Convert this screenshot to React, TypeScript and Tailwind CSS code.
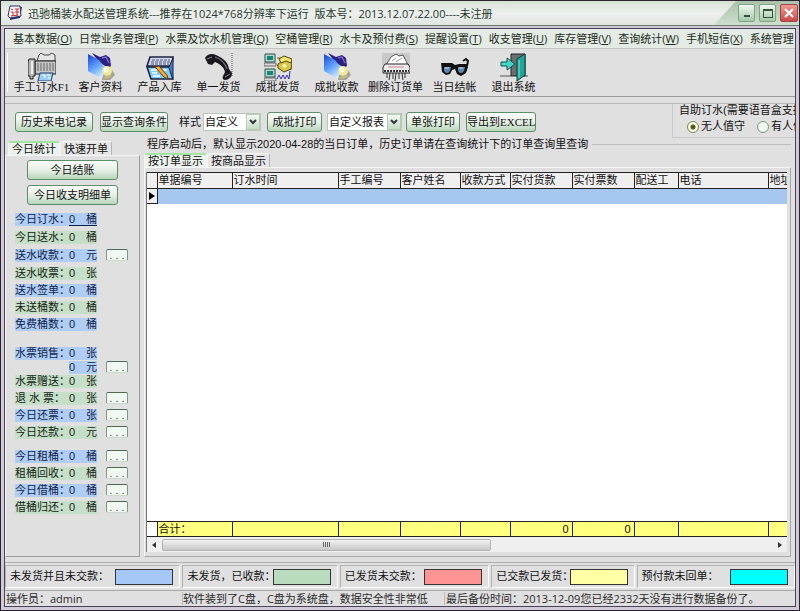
import { clsx } from "clsx";
import type { ReactNode } from "react";

const menus = [
    { label: "基本数据", hotkey: "O" },
    { label: "日常业务管理", hotkey: "P" },
    { label: "水票及饮水机管理", hotkey: "Q" },
    { label: "空桶管理", hotkey: "R" },
    { label: "水卡及预付费", hotkey: "S" },
    { label: "提醒设置", hotkey: "T" },
    { label: "收支管理", hotkey: "U" },
    { label: "库存管理", hotkey: "V" },
    { label: "查询统计", hotkey: "W" },
    { label: "手机短信", hotkey: "X" },
    { label: "系统管理", hotkey: "" },
];

type Stat = { label: string; value: string; unit: string; tone: "blue" | "green"; more?: boolean; link?: boolean };

const deliveryStats: Stat[] = [
    { label: "今日订水：", value: "0", unit: "桶", tone: "blue", link: true },
    { label: "今日送水：", value: "0", unit: "桶", tone: "green" },
    { label: "送水收款：", value: "0", unit: "元", tone: "blue", more: true },
    { label: "送水收票：", value: "0", unit: "张", tone: "green" },
];

const pendingStats: Stat[] = [
    { label: "送水签单：", value: "0", unit: "桶", tone: "blue" },
    { label: "未送桶数：", value: "0", unit: "桶", tone: "green" },
    { label: "免费桶数：", value: "0", unit: "桶", tone: "blue" },
];

const ticketSales: Stat[] = [
    { label: "水票销售：", value: "0", unit: "张", tone: "blue" },
    { label: "", value: "0", unit: "元", tone: "blue", more: true },
    { label: "水票赠送：", value: "0", unit: "张", tone: "green" },
];

const ticketReturns: Stat[] = [
    { label: "退 水 票：", value: "0", unit: "张", tone: "green", more: true },
    { label: "今日还票：", value: "0", unit: "张", tone: "blue", more: true },
    { label: "今日还款：", value: "0", unit: "元", tone: "green", more: true },
];

const bucketStats: Stat[] = [
    { label: "今日租桶：", value: "0", unit: "桶", tone: "blue", more: true },
    { label: "租桶回收：", value: "0", unit: "桶", tone: "green", more: true },
    { label: "今日借桶：", value: "0", unit: "桶", tone: "blue", more: true },
    { label: "借桶归还：", value: "0", unit: "桶", tone: "green", more: true },
];

const columns = [
    { title: "单据编号", width: "w-[75px]", total: "合计：" },
    { title: "订水时间", width: "w-[106px]", total: "" },
    { title: "手工编号", width: "w-[62px]", total: "" },
    { title: "客户姓名", width: "w-[60px]", total: "" },
    { title: "收款方式", width: "w-[50px]", total: "" },
    { title: "实付货款", width: "w-[62px]", total: "0" },
    { title: "实付票数", width: "w-[62px]", total: "0" },
    { title: "配送工", width: "w-[44px]", total: "" },
    { title: "电话", width: "w-[90px]", total: "" },
    { title: "地址", width: "", total: "" },
];

const legend = [
    { label: "未发货并且未交款：", color: "bg-[#a6c8f6]" },
    { label: "未发货，已收款：", color: "bg-[#b9dcbf]" },
    { label: "已发货未交款：", color: "bg-[#ff9494]" },
    { label: "已交款已发货：", color: "bg-[#ffffa6]" },
    { label: "预付款未回单：", color: "bg-[#00ffff]" },
];

function FaxIcon() {
    return (
        <svg viewBox="0 0 28 28" className="size-7" aria-hidden="true">
            <path d="M9 8l2-6 2-2 3 2h5l3-2 3 2v6z" fill="#e6e6e6" stroke="#444" />
            <path d="M7 8h21v13H7z" fill="#c6c6c6" stroke="#222" />
            <path d="M1 6h6v17H5v3H2v-3H0V9z" fill="#b4b4b4" stroke="#222" />
            <path d="M4 8v13" stroke="#eee" strokeWidth="2" />
            <path d="M9 11h17M9 13h17M9 15h17M9 17h17" stroke="#666" strokeDasharray="2 1" />
            <path d="M12 20h13l-2 8H10z" fill="#9ccdf2" stroke="#1c3f70" />
            <path d="M14 22h3v3m2-3h3m-2 3h3" stroke="#fff" fill="none" />
        </svg>
    );
}

function FolderIcon({ id }: { id: string }) {
    return (
        <svg viewBox="0 0 28 28" className="size-7" aria-hidden="true">
            <defs>
                <linearGradient id={id} x1="0.2" y1="0" x2="0.7" y2="1">
                    <stop offset="0" stopColor="#1d50d8" />
                    <stop offset="0.5" stopColor="#62a2ff" />
                    <stop offset="1" stopColor="#d8f1ff" />
                </linearGradient>
            </defs>
            <path d="M15 20l10-3 3 5-5 5-8 0z" fill="#a4a29a" />
            <path d="M5 0l8 4 6-2 4 3 1 8-3 2-9-6z" fill="#2c2380" />
            <path d="M15 5l4-1 3 6" fill="none" stroke="#7a68cc" strokeWidth="1.5" />
            <path d="M1 1l11 6 6 8-3 11L1 18z" fill={`url(#${id})`} />
            <circle cx="20" cy="18" r="5" fill="#efe89c" />
            <circle cx="19" cy="17" r="2.4" fill="#fffff0" />
            <path d="M15 25l7-3 3 1-5 3z" fill="#c9bb7c" />
        </svg>
    );
}

function StockIcon() {
    return (
        <svg viewBox="0 0 28 28" className="size-7" aria-hidden="true">
            <path d="M4 4h23l-1 9H1z" fill="#d5d9e6" stroke="#1b2244" strokeWidth="1.6" />
            <path d="M6 7h18M5 9h19M5 11h18" stroke="#4a5684" strokeDasharray="3 1" />
            <path d="M1 14h22l4 12H5z" fill="#7fcdf5" stroke="#1b2244" strokeWidth="1.6" />
            <path d="M23 14l4-9v20" fill="#3f7cc8" stroke="#1b2244" />
            <path d="M5 17h6M6 20h5M7 23h7M17 17h4" stroke="#fff" strokeWidth="1.4" />
            <path d="M9 14l4-1 8 9 1 4-4-2z" fill="#f5a735" stroke="#6b3a0d" />
        </svg>
    );
}

function PhoneIcon() {
    return (
        <svg viewBox="0 0 28 28" className="size-7" aria-hidden="true">
            <path d="M27 0v23l-5 3" fill="none" stroke="#555" strokeDasharray="1 1" />
            <path
                d="M0 5C2 1 7 0 11 2c7 3 12 7 13 14l3 4c0 4-3 7-7 7-2 0-3-2-2-4l2-4c-1-5-5-8-10-10l-3 3-4-1z"
                fill="#1c171e"
            />
            <path d="M10 4c6 2 10 6 12 12" fill="none" stroke="#7d7484" strokeWidth="1.2" />
            <path d="M2 6l5-2M20 24l5-3" stroke="#8b8791" />
        </svg>
    );
}

function NetworkIcon() {
    return (
        <svg viewBox="0 0 28 28" className="size-7" aria-hidden="true">
            <path d="M1 1h10v8H1zM1 16h10v8H1z" fill="#b9d3cd" stroke="#24544c" />
            <path d="M3 3h6v4H3zM3 18h6v4H3z" fill="#15877a" />
            <path d="M0 10h12v3H0zM0 25h12v3H0z" fill="#d9d9d9" stroke="#444" strokeWidth=".7" />
            <path d="M13 12l5 4h10M13 5h6" fill="none" stroke="#6b6b1c" />
            <path d="M14 11l8-5 6 4-1 6-7 3-6-4z" fill="#d8c648" stroke="#4e4509" />
            <path d="M15 6l5-3 8 3-1 4-5-2-5 2z" fill="#f4e66c" stroke="#4e4509" />
            <path d="M18 12l3-1 2 2-3 2z" fill="#fff7b0" />
            <path d="M13 26l2-4 2 4 2-4 2 4 2-4 2 4 1-8" fill="none" stroke="#3430b8" />
        </svg>
    );
}

function ShredderIcon() {
    return (
        <svg viewBox="0 0 28 28" className="size-7" aria-hidden="true">
            <path d="M0 0h28v12H0z" fill="#c9c9c9" />
            <path d="M4 12l5-8 5-3 3 2 4-1 5 10z" fill="#fff" stroke="#555" />
            <path d="M10 8l4-3m0 4l6-4" stroke="#999" />
            <path d="M3 11h23l2 3v6H1v-6z" fill="#ececec" stroke="#222" />
            <path d="M6 14h16" stroke="#c98a90" />
            <path d="M2 18h25" stroke="#333" strokeWidth="2" strokeDasharray="2 1" />
            <path d="M5 20v5m3-5l-1 7m4-7v6m3-6l-1 8m4-8v6m3-6l1 7m2-7v5" stroke="#333" />
        </svg>
    );
}

function GlassesIcon() {
    return (
        <svg viewBox="0 0 28 28" className="size-7" aria-hidden="true">
            <path d="M0 10l11 0 3 2 4-1h8l1 3-2 6-5 3-4-2-2-5-3 1-2 4-4 1-4-3z" fill="#111" />
            <path d="M3 14h7l-1 4-2 2H5l-2-2zM17 14h7l-1 4-2 2h-2l-2-2z" fill="#5f86a8" />
            <path d="M4 15h4M18 15h4" stroke="#c5dff0" />
            <path d="M26 13l1-5-2-2-3 2" fill="none" stroke="#111" strokeWidth="2" />
        </svg>
    );
}

function ExitIcon() {
    return (
        <svg viewBox="0 0 28 28" className="size-7" aria-hidden="true">
            <path d="M0 23h11m13 0h4" stroke="#555" />
            <path d="M11 1h14v22H11z" fill="#6b6f70" stroke="#222" />
            <path d="M17 6l8-5v21l-8 6z" fill="#1fa79b" stroke="#0c3f3a" />
            <path d="M19 7v18" fill="none" stroke="#7fe0d6" />
            <path d="M1 9h6V5l8 6-8 6v-4H1z" fill="#46d6cb" stroke="#0c4f4a" />
        </svg>
    );
}

const tools = [
    { label: "手工订水F1", icon: <FaxIcon /> },
    { label: "客户资料", icon: <FolderIcon id="folder-customer" /> },
    { label: "产品入库", icon: <StockIcon /> },
    { label: "单一发货", icon: <PhoneIcon /> },
    { label: "成批发货", icon: <NetworkIcon /> },
    { label: "成批收款", icon: <FolderIcon id="folder-payment" /> },
    { label: "删除订货单", icon: <ShredderIcon /> },
    { label: "当日结帐", icon: <GlassesIcon /> },
    { label: "退出系统", icon: <ExitIcon /> },
];

function PushButton({ className, children }: { className?: string; children: ReactNode }) {
    return (
        <button
            type="button"
            className={clsx(
                "h-5 shrink-0 rounded-[3px] border border-[#5f8f69] bg-linear-to-b from-[#fbfdfb] via-[#e6f0e6] to-[#b9d6bc] text-center whitespace-nowrap",
                className
            )}
        >
            {children}
        </button>
    );
}

function DropDown({ label, value, className }: { label: string; value: string; className: string }) {
    return (
        <div className={clsx("relative h-[18px] shrink-0", className)}>
            <select
                aria-label={label}
                className="h-full w-full appearance-none border border-[#b8c8b8] bg-white pl-px leading-4"
            >
                <option>{value}</option>
            </select>
            <span className="pointer-events-none absolute inset-y-px right-px flex w-[14px] items-center justify-center border border-[#b5ccb5] bg-linear-to-b from-[#f4faf4] to-[#c6dcc6]">
                <svg viewBox="0 0 8 6" className="h-[6px] w-2" aria-hidden="true">
                    <path d="M1 1l3 3 3-3" fill="none" stroke="#334" strokeWidth="2" />
                </svg>
            </span>
        </div>
    );
}

function Tab({ active, children }: { active?: boolean; children: ReactNode }) {
    return (
        <button
            type="button"
            role="tab"
            aria-selected={!!active}
            className={clsx(
                "h-[14px] rounded-t-[3px] border-x border-t px-[3px] leading-[12px] whitespace-nowrap",
                active
                    ? "border-t-2 border-x-[#f4f4f4] border-t-[#a2e6a2] bg-[#ecf3ec]"
                    : "border-[#f4f4f4] border-r-[#b4b4b4] bg-[#e6e6e6]"
            )}
        >
            {children}
        </button>
    );
}

function StatRow({ stat }: { stat: Stat }) {
    const tone = stat.tone === "blue" ? "bg-[#b0cdf4] text-[#0d1f4c]" : "bg-[#c6dfc8] text-[#142414]";
    return (
        <div className="flex h-[14px] items-center">
            <span className={clsx("h-[13px] w-[54px] whitespace-nowrap", stat.label && tone)}>{stat.label}</span>
            <span className={clsx("flex h-[13px] w-7 justify-between", tone, stat.link && "border-b border-[#0d1f4c]")}>
                <span>{stat.value}</span>
                <span>{stat.unit}</span>
            </span>
            {stat.more && (
                <button
                    type="button"
                    aria-label={`${stat.label || "水票销售"}明细`}
                    className="ml-[9px] flex h-3 w-[22px] items-center justify-center rounded-[2px] border border-x-[#7c9a7e] border-t-[#4f6a52] border-b-[#c9dcc9] bg-[#f1f8f1] leading-none text-[#444]"
                >
                    . . .
                </button>
            )}
        </div>
    );
}

function TitleBar() {
    return (
        <header className="flex h-[25px] shrink-0 items-center border-b border-[#6c786c] bg-linear-to-b from-[#d5e2d5] via-[#eef0ee] to-[#e0e6e0] pl-[6px] font-['Open_Sans','Noto_Sans_CJK_SC',sans-serif]">
            <svg viewBox="0 0 16 16" className="size-4 shrink-0" aria-hidden="true">
                <path d="M4 1l11 1-2 11-10 2z" fill="#26346e" />
                <path d="M3 1l10 0 1 10-11 2L1 11z" fill="#fbf3f3" stroke="#26346e" />
                <path d="M4 4l2 1m-2 2l2 0v4m2-7l4 0m-2 0v7m-2-4h4m-8 4l7-1" fill="none" stroke="#d02a2a" />
            </svg>
            <h1 className="ml-[5px] flex-1 overflow-hidden whitespace-pre text-[#26382c]">
                {"迅驰桶装水配送管理系统---推荐在1024*768分辨率下运行  版本号：2013.12.07.22.00----未注册"}
            </h1>
            <div className="flex h-full items-center gap-1 bg-linear-to-b from-[#a9c2a9] to-[#cfdfcf] pr-px pl-[24px] [clip-path:polygon(22px_0,100%_0,100%_100%,0_100%)]">
                <button
                    type="button"
                    aria-label="最小化"
                    className="flex h-[18px] w-[17px] items-end justify-center rounded-[2px] border border-[#7ea384] bg-linear-to-b from-[#f0f7f0] to-[#a5c9a9] pb-1"
                >
                    <span className="h-[2px] w-[6px] bg-[#35523a]" />
                </button>
                <button
                    type="button"
                    aria-label="最大化"
                    className="flex h-[18px] w-[17px] items-center justify-center rounded-[2px] border border-[#7ea384] bg-linear-to-b from-[#f0f7f0] to-[#a5c9a9]"
                >
                    <span className="h-[9px] w-[10px] border border-t-2 border-[#35523a]" />
                </button>
                <button
                    type="button"
                    aria-label="关闭"
                    className="flex h-[18px] w-[18px] items-center justify-center rounded-[2px] border border-[#a04646] bg-linear-to-b from-[#ee9a92] to-[#c94a48]"
                >
                    <svg viewBox="0 0 10 10" className="size-[10px]" aria-hidden="true">
                        <path d="M1 1l8 8M9 1l-8 8" stroke="#fff" strokeWidth="2" />
                    </svg>
                </button>
            </div>
        </header>
    );
}

function SideBar() {
    return (
        <aside className="flex w-[135px] shrink-0 flex-col pt-[3px]">
            <div role="tablist" className="flex pl-[3px]">
                <Tab active>今日统计</Tab>
                <Tab>快速开单</Tab>
            </div>
            <div className="flex flex-1 flex-col border border-[#f6f6f6] border-r-[#9c9c9c] border-b-[#9c9c9c] pt-1">
                <div className="flex flex-col items-center gap-[5px]">
                    <PushButton className="w-[91px]">今日结账</PushButton>
                    <PushButton className="w-[91px]">今日收支明细单</PushButton>
                </div>
                <div className="flex flex-col gap-1 pt-[7px] pl-[9px]">
                    {deliveryStats.map((stat) => (
                        <StatRow key={stat.label} stat={stat} />
                    ))}
                </div>
                <div className="flex flex-col gap-[3px] pt-[3px] pl-[9px]">
                    {pendingStats.map((stat) => (
                        <StatRow key={stat.label} stat={stat} />
                    ))}
                </div>
                <div className="flex flex-col pt-[15px] pl-[9px]">
                    {ticketSales.map((stat) => (
                        <StatRow key={stat.label} stat={stat} />
                    ))}
                </div>
                <div className="flex flex-col gap-[3px] pt-[3px] pl-[9px]">
                    {ticketReturns.map((stat) => (
                        <StatRow key={stat.label} stat={stat} />
                    ))}
                </div>
                <div className="flex flex-col gap-[3px] pt-[10px] pl-[9px]">
                    {bucketStats.map((stat) => (
                        <StatRow key={stat.label} stat={stat} />
                    ))}
                </div>
            </div>
        </aside>
    );
}

function OrderGrid() {
    return (
        <div className="min-h-0 flex-1 overflow-hidden bg-white">
            <table className="h-full w-full table-fixed border-collapse">
                <thead>
                    <tr className="h-4 bg-[#efefef]">
                        <th className="w-[10px] border border-l-0 border-[#222] p-0" />
                        {columns.map((col) => (
                            <th
                                key={col.title}
                                className={clsx(
                                    "overflow-hidden border border-r-0 border-[#222] p-0 pl-px text-left font-normal whitespace-nowrap",
                                    col.width
                                )}
                            >
                                {col.title}
                            </th>
                        ))}
                    </tr>
                </thead>
                <tbody>
                    <tr className="h-[15px]">
                        <td className="border border-l-0 border-[#222] bg-[#efefef] p-0">
                            <svg viewBox="0 0 6 8" className="mx-auto h-2 w-[6px]" aria-hidden="true">
                                <path d="M0 0l6 4-6 4z" fill="#000" />
                            </svg>
                        </td>
                        <td colSpan={columns.length} className="bg-[#a6c8f0] p-0" />
                    </tr>
                    <tr>
                        <td colSpan={columns.length + 1} className="p-0" />
                    </tr>
                </tbody>
                <tfoot>
                    <tr className="h-[15px]">
                        <td className="border border-l-0 border-[#222] bg-white p-0" />
                        {columns.map((col) => (
                            <td
                                key={col.title}
                                className={clsx(
                                    "border border-r-0 border-[#222] bg-[#ffff80] p-0 leading-[14px]",
                                    col.total === "0" ? "pr-[3px] text-right" : "pl-px"
                                )}
                            >
                                {col.total}
                            </td>
                        ))}
                    </tr>
                </tfoot>
            </table>
        </div>
    );
}

function ScrollBar() {
    return (
        <div className="flex h-[15px] shrink-0 items-center justify-between bg-[#efefef] px-[5px]">
            <svg viewBox="0 0 4 6" className="h-[6px] w-1" aria-hidden="true">
                <path d="M4 0L0 3l4 3z" fill="#333" />
            </svg>
            <div className="mx-[6px] flex-1">
                <div className="flex h-3 w-[54%] items-center justify-center gap-px rounded-[2px] border border-[#b4b4b4] bg-linear-to-b from-[#f2f2f2] to-[#c8c8c8]">
                    <span className="h-[5px] w-px bg-[#666]" />
                    <span className="h-[5px] w-px bg-[#666]" />
                    <span className="h-[5px] w-px bg-[#666]" />
                    <span className="h-[5px] w-px bg-[#666]" />
                </div>
            </div>
            <svg viewBox="0 0 4 6" className="h-[6px] w-1" aria-hidden="true">
                <path d="M0 0l4 3-4 3z" fill="#333" />
            </svg>
        </div>
    );
}

export default function App() {
    return (
        <div className="flex h-screen min-h-[600px] flex-col overflow-hidden border border-[#2c2430] bg-[#cfcad6] font-['Liberation_Sans_Narrow','Liberation_Sans','Noto_Sans_CJK_SC',sans-serif] text-[11px] leading-[13px] text-[#111]">
            <TitleBar />
            <div className="mx-[3px] mt-[2px] mb-[3px] flex min-h-0 flex-1 flex-col border border-[#4a4258] bg-[#e0e0e0]">
                <nav className="flex h-[19px] shrink-0 items-center gap-[7px] overflow-hidden bg-[#e3ebe4] pl-2 font-['Open_Sans','Noto_Sans_CJK_SC',sans-serif] text-[#1c2a20]">
                    {menus.map((menu) => (
                        <button key={menu.label} type="button" className="shrink-0 whitespace-nowrap">
                            {menu.label}
                            {menu.hotkey && (
                                <>
                                    (<u>{menu.hotkey}</u>)
                                </>
                            )}
                        </button>
                    ))}
                </nav>

                <div className="flex h-[49px] shrink-0 border-t border-b border-t-[#c4c4c4] border-b-[#9a9a9a] pt-1 pl-[2px] font-['Liberation_Serif','Noto_Sans_CJK_SC',serif]">
                    <div className="mr-1 mb-1 w-px bg-white" />
                    {tools.map((tool) => (
                        <button
                            key={tool.label}
                            type="button"
                            className="flex w-[59px] shrink-0 flex-col items-center whitespace-nowrap"
                        >
                            {tool.icon}
                            {tool.label}
                        </button>
                    ))}
                </div>

                <div className="mt-[6px] flex h-[35px] shrink-0 overflow-hidden border-t border-[#b8b8b8] pl-[10px]">
                    <div className="flex flex-1 items-start pt-2">
                        <PushButton className="w-[78px]">历史来电记录</PushButton>
                        <PushButton className="ml-[7px] w-[68px]">显示查询条件</PushButton>
                        <span className="mt-1 ml-[11px] shrink-0">样式</span>
                        <DropDown label="样式" value="自定义" className="mt-px ml-[2px] w-[58px]" />
                        <PushButton className="ml-[6px] w-[55px]">成批打印</PushButton>
                        <DropDown label="报表" value="自定义报表" className="mt-px ml-[5px] w-[75px]" />
                        <PushButton className="ml-1 w-[54px]">单张打印</PushButton>
                        <PushButton className="ml-[6px] w-[70px] font-['Liberation_Serif','Noto_Sans_CJK_SC',serif]">
                            导出到EXCEL
                        </PushButton>
                    </div>
                    <div
                        className="w-[123px] shrink-0 border-b border-l border-[#c9c9c9] pl-[6px] whitespace-nowrap"
                        role="radiogroup"
                        aria-label="自助订水"
                    >
                        <div>自助订水(需要语音盒支持</div>
                        <div className="flex gap-3 pt-[3px] pl-2">
                            <label className="flex shrink-0 items-center gap-[2px]">
                                <input
                                    type="radio"
                                    name="duty"
                                    defaultChecked
                                    className="size-3 appearance-none rounded-full border border-[#6f8a60] bg-[#fbfbe8] checked:bg-[radial-gradient(circle,#4d5a1c_2px,#fbfbe0_3px)]"
                                />
                                无人值守
                            </label>
                            <label className="flex shrink-0 items-center gap-[2px]">
                                <input
                                    type="radio"
                                    name="duty"
                                    className="size-3 appearance-none rounded-full border border-[#7a967a] bg-[#f1f8f1]"
                                />
                                有人值守
                            </label>
                        </div>
                    </div>
                </div>

                <div className="flex min-h-0 flex-1 gap-1 pr-1">
                    <SideBar />
                    <section className="flex min-w-0 flex-1 flex-col">
                        <div className="flex items-center gap-1 pl-[3px] whitespace-nowrap">
                            <p>程序启动后，默认显示2020-04-28的当日订单，历史订单请在查询统计下的订单查询里查询</p>
                            <div className="flex-1 border-t border-[#bdbdbd]" />
                        </div>
                        <div role="tablist" className="mt-[2px] flex">
                            <Tab active>按订单显示</Tab>
                            <Tab>按商品显示</Tab>
                        </div>
                        <div className="flex min-h-0 flex-1 flex-col border border-[#f6f6f6] border-r-[#a8a8a8] border-b-[#a8a8a8] pt-1 pr-[3px] pb-1 pl-px">
                            <div className="flex min-h-0 flex-1 flex-col border-l border-[#777]">
                                <OrderGrid />
                                <ScrollBar />
                            </div>
                        </div>
                    </section>
                </div>

                <div className="mt-[5px] grid h-[26px] shrink-0 grid-cols-[minmax(0,175fr)_minmax(0,155fr)_minmax(0,149fr)_minmax(0,143fr)_minmax(0,158fr)] gap-x-[2px] border-t border-[#b0b0b0] pt-[2px]">
                    {legend.map((item) => (
                        <div
                            key={item.label}
                            className="flex items-center justify-between border border-t-[#b4b4b4] border-r-white border-b-white border-l-[#b4b4b4] pr-[6px] pl-1 whitespace-nowrap"
                        >
                            <span className="min-w-0">{item.label}</span>
                            <span className={clsx("h-4 w-[58px] shrink-0 border border-[#333]", item.color)} />
                        </div>
                    ))}
                </div>

                <footer className="mt-[2px] grid h-4 shrink-0 grid-cols-[177fr_262fr_351fr] items-center border-t border-[#a8a8a8] font-['Open_Sans','Noto_Sans_CJK_SC',sans-serif] whitespace-nowrap text-[#2a2a2a]">
                    <span className="pl-px">操作员：admin</span>
                    <span className="border-l border-[#bbb]">软件装到了C盘，C盘为系统盘，数据安全性非常低</span>
                    <span className="border-l border-[#bbb] pl-px">最后备份时间：2013-12-09您已经2332天没有进行数据备份了。</span>
                </footer>
            </div>
        </div>
    );
}
